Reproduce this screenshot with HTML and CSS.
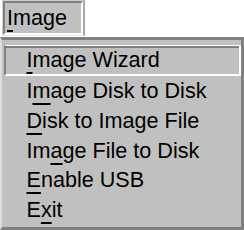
FILE: index.html
```html
<!DOCTYPE html>
<html>
<head>
<meta charset="utf-8">
<link rel="stylesheet" href="styles.css">
</head>
<body>
<div class="bar">
  <div class="title"><div class="title-in"><u>I</u>mage</div></div>
</div>
<div class="menu">
  <div class="item hl"><u>I</u>mage Wizard</div>
  <div class="item">I<u>m</u>age Disk to Disk</div>
  <div class="item"><u>D</u>isk to Image File</div>
  <div class="item">Im<u>a</u>ge File to Disk</div>
  <div class="item"><u>E</u>nable USB</div>
  <div class="item">E<u>x</u>it</div>
</div>
</body>
</html>
```

FILE: styles.css
```css
html, body {
  margin: 0;
  padding: 0;
  background: #ffffff;
}
body {
  width: 244px;
  height: 230px;
  overflow: hidden;
  font-family: "Liberation Sans", Arial, sans-serif;
  font-size: 21.6px;
  color: #000;
}
u {
  text-decoration: underline;
  text-decoration-thickness: 2px;
  text-underline-offset: 5px;
}
.bar {
  display: flex;
  height: 36px;
  background: #ffffff;
}
.title {
  margin-left: 2px;
  width: 83px;
  box-sizing: border-box;
  border-top: 1px solid #d0d0d0;
  border-left: 1px solid #d0d0d0;
  border-right: 2px solid #a8a8a8;
  border-bottom: 1px solid #e8e8e8;
}
.title-in {
  height: 100%;
  box-sizing: border-box;
  background: #c0c0c0;
  border-top: 2px solid #808080;
  border-left: 2px solid #808080;
  border-right: 2px solid #ffffff;
  border-bottom: 2px solid #ffffff;
  padding-left: 2px;
  line-height: 30px;
}
.menu {
  margin-top: 1px;
  height: 193px;
  box-sizing: border-box;
  background: #c0c0c0;
  border-top: 3px solid #808080;
  border-right: 3px solid #808080;
  border-bottom: 3px solid #808080;
  border-left: 2px solid #dcdcdc;
  padding: 5px 0 2px 2px;
}
.item {
  line-height: 29.8px;
  height: 29.8px;
  padding-left: 22.5px;
  white-space: nowrap;
}
.hl {
  height: 28px;
  line-height: 28px;
  padding-left: 20.5px;
  border-top: 1px solid #ffffff;
  border-left: 2px solid #808080;
  border-right: 2px solid #ffffff;
  border-bottom: 2px solid #ffffff;
  box-shadow: inset 0 2px 0 #808080;
}
```
